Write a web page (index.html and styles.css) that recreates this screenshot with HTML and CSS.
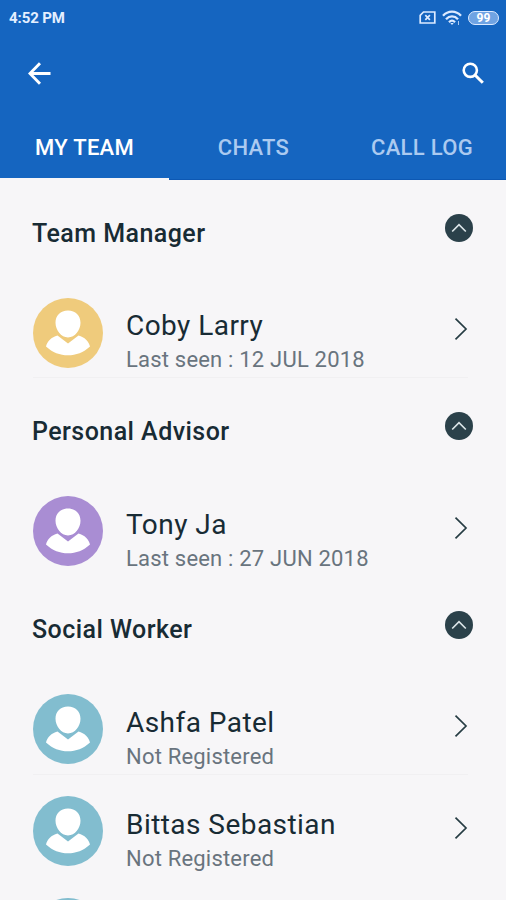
FILE: index.html
```html
<!DOCTYPE html>
<html lang="en">
<head>
<meta charset="utf-8">
<title>My Team</title>
<link rel="stylesheet" href="styles.css">
</head>
<body>
<svg width="0" height="0" class="defs">
  <symbol id="person" viewBox="0 0 70 70"><path d="M35 12.500c7.600 0 12.500 5 12.500 12.300C47.500 32 42 39.500 35 39.500S22.500 32 22.500 24.800C22.500 17.500 27.400 12.500 35 12.500zM24.500 37.500L35 45.500 45.500 37.500C51.500 39 56 43.500 57 48.500 50.500 54.500 43 57.300 35 57.300S19.500 54.500 13 48.500C14 43.500 18.500 39 24.500 37.500z" fill="#fff"/></symbol>
  <symbol id="next" viewBox="0 0 14 24"><path d="M1.500 1.700L12 12 1.500 22.300" fill="none" stroke="#263c43" stroke-width="1.700"/></symbol>
  <symbol id="up" viewBox="0 0 28 28"><circle cx="14" cy="14" r="14" fill="#2b414a"/><path d="M7.200 17.500L14 10.700 20.800 17.500" fill="none" stroke="#dce5e8" stroke-width="1.700"/></symbol>
</svg>
<header class="header">
  <div class="status">
    <span class="time">4:52 PM</span>
    <span class="status-icons">
      <svg class="sim" viewBox="0 0 17 13"><path d="M4.500 1H15.800V12H1.200V4.300z" fill="none" stroke="#dceaff" stroke-width="1.700"/><path d="M6.300 4.200l4.600 4.600M10.900 4.200L6.300 8.800" stroke="#dceaff" stroke-width="1.700"/></svg>
      <svg class="wifi" viewBox="0 0 20 16"><g fill="none" stroke="#dceaff" stroke-width="2.300"><path d="M1 5.800C6 .300 14 .300 19 5.800"/><path d="M4 9.200C7.500 5.400 12.500 5.400 16 9.200"/><path d="M7 12.200C9 10.200 11 10.200 13 12.200"/></g><path d="M8.300 13h3.400L10 15z" fill="#dceaff"/><path d="M16.500 11v4" stroke="#a9c9f2" stroke-width="1"/></svg>
      <span class="battery">99</span>
    </span>
  </div>
  <div class="toolbar">
    <svg class="back" viewBox="0 0 24 24"><path d="M12.500 1.200L2 12l10.500 10.800M2.500 12H23.500" fill="none" stroke="#fff" stroke-width="3"/></svg>
    <svg class="search" viewBox="0 0 22 22"><circle cx="8.300" cy="8.300" r="6.600" fill="none" stroke="#fff" stroke-width="2.600"/><path d="M13 13l7.800 7.800" stroke="#fff" stroke-width="3"/></svg>
  </div>
  <nav class="tabs">
    <span class="tab active">MY TEAM</span>
    <span class="tab">CHATS</span>
    <span class="tab">CALL LOG</span>
  </nav>
</header>
<main>
  <section>
    <div class="head"><h2>Team Manager</h2><svg class="up"><use href="#up"/></svg></div>
    <div class="row">
      <svg class="avatar gold"><use href="#person"/></svg>
      <div class="info"><div class="name">Coby Larry</div><div class="sub">Last seen : 12 JUL 2018</div></div>
      <svg class="next"><use href="#next"/></svg>
    </div>
  </section>
  <section>
    <div class="head"><h2>Personal Advisor</h2><svg class="up"><use href="#up"/></svg></div>
    <div class="row last">
      <svg class="avatar violet"><use href="#person"/></svg>
      <div class="info"><div class="name">Tony Ja</div><div class="sub">Last seen : 27 JUN 2018</div></div>
      <svg class="next"><use href="#next"/></svg>
    </div>
  </section>
  <section>
    <div class="head"><h2>Social Worker</h2><svg class="up"><use href="#up"/></svg></div>
    <div class="row">
      <svg class="avatar teal"><use href="#person"/></svg>
      <div class="info"><div class="name">Ashfa Patel</div><div class="sub">Not Registered</div></div>
      <svg class="next"><use href="#next"/></svg>
    </div>
    <div class="row last">
      <svg class="avatar teal"><use href="#person"/></svg>
      <div class="info"><div class="name">Bittas Sebastian</div><div class="sub">Not Registered</div></div>
      <svg class="next"><use href="#next"/></svg>
    </div>
    <div class="row">
      <svg class="avatar teal"><use href="#person"/></svg>
    </div>
  </section>
</main>
</body>
</html>
```
FILE: styles.css
```css
* { box-sizing: border-box; }
body { margin: 0; height: 900px; overflow: hidden; background: #f7f6f8; font-family: Roboto, sans-serif; color: #182b34; display: flex; flex-direction: column; }
svg { display: block; flex: none; }
.defs { position: absolute; }
.header { flex: none; height: 180px; background: #1565c0; display: flex; flex-direction: column; border-bottom: 1px solid #0d58b3; }
.status { height: 36px; display: flex; align-items: center; justify-content: space-between; padding: 0 7px 0 9px; color: #e4efff; }
.time { font-size: 15px; font-weight: 700; letter-spacing: -0.1px; }
.status-icons { display: flex; align-items: center; gap: 6px; padding-bottom: 1px; }
.sim { width: 17px; height: 13px; }
.wifi { width: 20px; height: 16px; }
.battery { width: 31px; height: 14px; border: 1.5px solid #dceaff; border-radius: 7px; background: #6fa3e3; color: #fff; font-size: 12px; line-height: 13px; font-weight: 700; text-align: center; }
.toolbar { height: 76px; display: flex; align-items: center; justify-content: space-between; padding: 0 22px 2px 28px; }
.back { width: 23px; height: 23px; }
.search { width: 22px; height: 22px; }
.tabs { flex: 1; display: grid; grid-template-columns: 169px 169px 168px; color: #abcaf0; font-size: 22px; font-weight: 500; letter-spacing: 0.3px; }
.tab { display: flex; justify-content: center; padding-top: 23px; line-height: 26px; white-space: nowrap; }
.active { color: #fff; border-bottom: 2px solid #f7f6f8; margin-bottom: -1px; }
main { flex: 1; min-height: 0; overflow: hidden; }
.head { height: 96.3px; display: flex; align-items: center; justify-content: space-between; padding: 0 33px 0 32px; }
h2 { margin: 0; padding-top: 11px; font-size: 25px; line-height: 30px; font-weight: 500; letter-spacing: 0.45px; white-space: nowrap; }
.up { width: 28px; height: 28px; }
.row { height: 102px; margin: 0 38px 0 33px; padding-top: 22px; display: flex; border-bottom: 1px solid #f1f0f2; }
.last { border-bottom-color: transparent; }
.avatar { width: 70px; height: 70px; border-radius: 50%; margin-top: -0.5px; }
.gold { background: #efcb7c; }
.violet { background: #a98dd3; }
.teal { background: #82bdcf; }
.info { flex: 1; margin-left: 23px; padding-top: 11px; white-space: nowrap; }
.name { font-size: 28px; line-height: 34px; letter-spacing: 0.45px; }
.sub { font-size: 22px; line-height: 28px; letter-spacing: 0.2px; color: #69747e; margin-top: 3px; }
.next { width: 14px; height: 24px; margin-top: 19px; }
```
